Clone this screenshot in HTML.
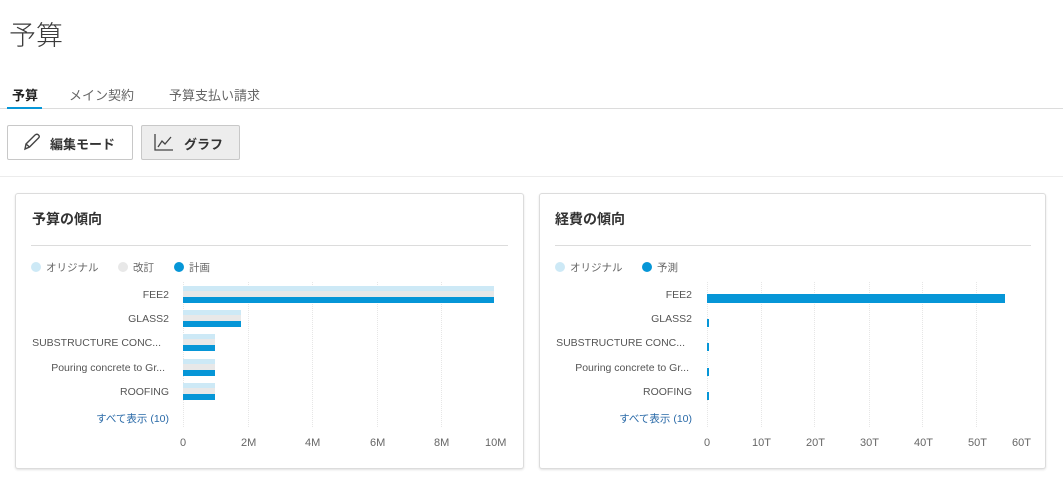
<!DOCTYPE html>
<html><head><meta charset="utf-8"><style>
*{margin:0;padding:0;box-sizing:border-box}
body{width:1063px;height:482px;background:#fff;font-family:"Liberation Sans","Noto Sans CJK JP",sans-serif;color:#3c3c3c;position:relative;overflow:hidden}
.a{position:absolute;white-space:nowrap}
.card{position:absolute;border:1px solid #dcdcdc;border-radius:3px;box-shadow:0 1px 2px rgba(0,0,0,.12);background:#fff}
.lab{position:absolute;font-size:10.5px;color:#555;text-align:right;white-space:nowrap}
.tick{position:absolute;font-size:11px;color:#666;white-space:nowrap}
.g{position:absolute;width:1px;border-left:1px dotted #e6e6e6}
.b{position:absolute}
.lb{background:#cde9f6}.gr{background:#e8e8e8}.bl{background:#0696d7}
.dot{position:absolute;width:10px;height:10px;border-radius:50%}
.leg{position:absolute;font-size:10.5px;color:#666;white-space:nowrap}
</style></head><body>
<div class="a" style="left:9px;top:14px;font-size:27px;color:#3c3c3c;font-weight:300">予算</div>
<div class="a" style="left:12px;top:85px;font-size:13px;font-weight:bold;color:#222">予算</div>
<div class="a" style="left:69px;top:85px;font-size:13px;color:#666">メイン契約</div>
<div class="a" style="left:169px;top:85px;font-size:13px;color:#666">予算支払い請求</div>
<div class="a" style="left:0;top:108px;width:1063px;height:1px;background:#dcdcdc"></div>
<div class="a" style="left:7px;top:107px;width:35px;height:2px;background:#0696d7"></div>
<div class="a" style="left:7px;top:125px;width:126px;height:35px;border:1px solid #c8c8c8;border-radius:2px;background:#fff"></div>
<svg class="a" style="left:22px;top:132px" width="20" height="20" viewBox="0 0 20 20"><path d="M3 17 L4 12 L13 3 Q15 1.5 16.5 3 Q18 4.5 16.5 6 L7.5 15 Z M4 12 L7.5 15" fill="none" stroke="#444" stroke-width="1.4"/></svg>
<div class="a" style="left:50px;top:134px;font-size:13px;font-weight:bold;color:#333">編集モード</div>
<div class="a" style="left:141px;top:125px;width:99px;height:35px;border:1px solid #c8c8c8;border-radius:2px;background:#ededed"></div>
<svg class="a" style="left:153px;top:132px" width="22" height="20" viewBox="0 0 22 20"><path d="M2 2 V18 H20 M5 15 L9 9 L12 12 L18 5" fill="none" stroke="#444" stroke-width="1.3"/></svg>
<div class="a" style="left:184px;top:134px;font-size:13px;font-weight:bold;color:#333">グラフ</div>
<div class="a" style="left:0;top:176px;width:1063px;height:1px;background:#ececec"></div>

<div class="card" style="left:15px;top:193px;width:509px;height:276px"></div>
<div class="a" style="left:32px;top:209px;font-size:14px;font-weight:bold;color:#333">予算の傾向</div>
<div class="a" style="left:31px;top:245px;width:477px;height:1px;background:#dcdcdc"></div>
<div class="dot lb" style="left:31px;top:262px"></div><div class="leg" style="left:46px;top:260px">オリジナル</div>
<div class="dot gr" style="left:118px;top:262px"></div><div class="leg" style="left:133px;top:260px">改訂</div>
<div class="dot bl" style="left:174px;top:262px"></div><div class="leg" style="left:189px;top:260px">計画</div>
<div class="g" style="left:183px;top:282px;height:145px"></div>
<div class="g" style="left:248px;top:282px;height:145px"></div>
<div class="g" style="left:312px;top:282px;height:145px"></div>
<div class="g" style="left:377px;top:282px;height:145px"></div>
<div class="g" style="left:441px;top:282px;height:145px"></div>
<div class="lab" style="right:894px;top:289px">FEE2</div>
<div class="lab" style="right:894px;top:313px">GLASS2</div>
<div class="lab" style="right:902px;top:337px">SUBSTRUCTURE CONC...</div>
<div class="lab" style="right:898px;top:362px">Pouring concrete to Gr...</div>
<div class="lab" style="right:894px;top:386px">ROOFING</div>
<div class="lab" style="right:894px;top:411px;color:#2a6aa8;font-size:10.5px">すべて表示 (10)</div>
<div class="b lb" style="left:183px;top:286px;width:311px;height:5px"></div><div class="b gr" style="left:183px;top:291px;width:311px;height:6px"></div><div class="b bl" style="left:183px;top:297px;width:311px;height:6px"></div>
<div class="b lb" style="left:183px;top:310px;width:58px;height:5px"></div><div class="b gr" style="left:183px;top:315px;width:58px;height:6px"></div><div class="b bl" style="left:183px;top:321px;width:58px;height:6px"></div>
<div class="b lb" style="left:183px;top:334px;width:32px;height:5px"></div><div class="b gr" style="left:183px;top:339px;width:32px;height:6px"></div><div class="b bl" style="left:183px;top:345px;width:32px;height:6px"></div>
<div class="b lb" style="left:183px;top:359px;width:32px;height:5px"></div><div class="b gr" style="left:183px;top:364px;width:32px;height:6px"></div><div class="b bl" style="left:183px;top:370px;width:32px;height:6px"></div>
<div class="b lb" style="left:183px;top:383px;width:32px;height:5px"></div><div class="b gr" style="left:183px;top:388px;width:32px;height:6px"></div><div class="b bl" style="left:183px;top:394px;width:32px;height:6px"></div>
<div class="tick" style="left:180px;top:437px">0</div>
<div class="tick" style="left:241px;top:437px">2M</div>
<div class="tick" style="left:305px;top:437px">4M</div>
<div class="tick" style="left:370px;top:437px">6M</div>
<div class="tick" style="left:434px;top:437px">8M</div>
<div class="tick" style="left:485px;top:437px">10M</div>

<div class="card" style="left:539px;top:193px;width:507px;height:276px"></div>
<div class="a" style="left:555px;top:209px;font-size:14px;font-weight:bold;color:#333">経費の傾向</div>
<div class="a" style="left:555px;top:245px;width:476px;height:1px;background:#dcdcdc"></div>
<div class="dot lb" style="left:555px;top:262px"></div><div class="leg" style="left:570px;top:260px">オリジナル</div>
<div class="dot bl" style="left:642px;top:262px"></div><div class="leg" style="left:657px;top:260px">予測</div>
<div class="g" style="left:761px;top:282px;height:145px"></div>
<div class="g" style="left:814px;top:282px;height:145px"></div>
<div class="g" style="left:869px;top:282px;height:145px"></div>
<div class="g" style="left:922px;top:282px;height:145px"></div>
<div class="g" style="left:976px;top:282px;height:145px"></div>
<div class="g" style="left:707px;top:282px;height:145px"></div>
<div class="lab" style="right:371px;top:289px">FEE2</div>
<div class="lab" style="right:371px;top:313px">GLASS2</div>
<div class="lab" style="right:378px;top:337px">SUBSTRUCTURE CONC...</div>
<div class="lab" style="right:374px;top:362px">Pouring concrete to Gr...</div>
<div class="lab" style="right:371px;top:386px">ROOFING</div>
<div class="lab" style="right:371px;top:411px;color:#2a6aa8;font-size:10.5px">すべて表示 (10)</div>
<div class="b bl" style="left:707px;top:294px;width:298px;height:9px"></div>
<div class="b bl" style="left:707px;top:319px;width:2px;height:8px"></div>
<div class="b bl" style="left:707px;top:343px;width:2px;height:8px"></div>
<div class="b bl" style="left:707px;top:368px;width:2px;height:8px"></div>
<div class="b bl" style="left:707px;top:392px;width:2px;height:8px"></div>
<div class="tick" style="left:704px;top:437px">0</div>
<div class="tick" style="left:752px;top:437px">10T</div>
<div class="tick" style="left:806px;top:437px">20T</div>
<div class="tick" style="left:860px;top:437px">30T</div>
<div class="tick" style="left:914px;top:437px">40T</div>
<div class="tick" style="left:968px;top:437px">50T</div>
<div class="tick" style="left:1012px;top:437px">60T</div>
</body></html>
